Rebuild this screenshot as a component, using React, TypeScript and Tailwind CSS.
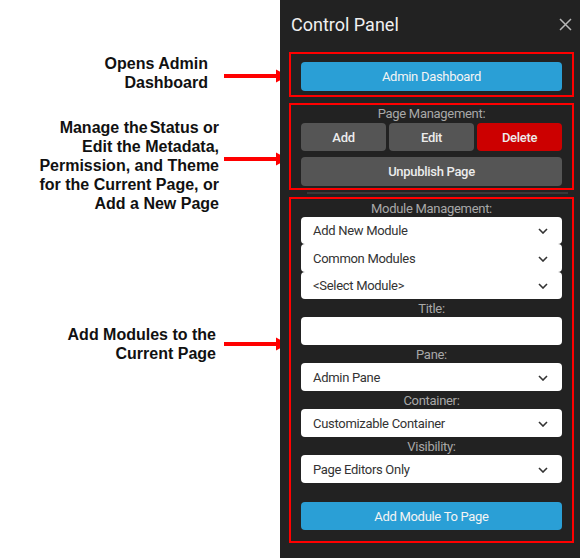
import { ReactNode } from 'react';

const roboto = { fontFamily: 'Roboto, "Noto Sans", sans-serif' };

function Arrow() {
  return (
    <svg width="64" height="14" viewBox="0 0 64 14" className="shrink-0">
      <rect x="0" y="5" width="54" height="4" fill="#ff0000" />
      <polygon points="52,0.5 64,7 52,13.5" fill="#ff0000" />
    </svg>
  );
}

function Note({ children, pr, arrowTop, className }: { children: ReactNode; pr: string; arrowTop: string; className: string }) {
  return (
    <div className={`flex items-start ${className}`}>
      <div className={`w-[224px] shrink-0 text-right ${pr}`}>{children}</div>
      <div className={arrowTop}>
        <Arrow />
      </div>
    </div>
  );
}

function Chevron() {
  return (
    <svg width="10" height="6" viewBox="0 0 10 6" className="shrink-0">
      <path d="M1 1 L5 5 L9 1" fill="none" stroke="#333" strokeWidth="1.6" />
    </svg>
  );
}

function Select({ label, h = 'h-[28px]' }: { label: string; h?: string }) {
  return (
    <div className={`${h} flex items-center justify-between rounded-[4px] bg-white pl-[12px] pr-[14px] pt-[1px] text-[#333]`}>
      <span>{label}</span>
      <Chevron />
    </div>
  );
}

function Label({ children }: { children: ReactNode }) {
  return <div className="h-[18px] text-center leading-[19px] text-[#a8a8a8]">{children}</div>;
}

export default function App() {
  return (
    <div className="flex h-[558px] w-[580px] bg-white">
      <div
        className="w-[280px] pt-[54px] text-[16px] font-bold leading-[19px] text-[#111]"
        style={{ fontFamily: '"Liberation Sans", Arial, sans-serif' }}
      >
        <Note pr="pr-[16px]" arrowTop="mt-[15px]" className="">
          Opens Admin
          <br />
          Dashboard
        </Note>
        <Note pr="pr-[5px]" arrowTop="mt-[34px]" className="mt-[26px]">
          Manage the<span className="ml-[2px]">Status or</span>
          <br />
          Edit the Metadata,
          <br />
          Permission, and Theme
          <br />
          for the Current Page, or
          <br />
          Add a New Page
        </Note>
        <Note pr="pr-[8px]" arrowTop="mt-[12px]" className="mt-[112px]">
          Add Modules to the
          <br />
          Current Page
        </Note>
      </div>

      <div className="w-[300px] bg-[#222222] text-[13px] tracking-[-0.3px]" style={roboto}>
        <div className="flex h-[52px] items-start justify-between pl-[11px] pr-[8px] pt-[13px]">
          <div className="text-[18px] leading-[24px] tracking-normal text-[#f0f0f0]">Control Panel</div>
          <svg width="13" height="13" viewBox="0 0 13 13" className="mt-[5px]">
            <path d="M1 1 L12 12 M12 1 L1 12" stroke="#b8b8b8" strokeWidth="1.5" />
          </svg>
        </div>

        <div className="pl-[9px] pr-[6px]">
          <div className="border-2 border-[#ff0000] px-[10px] pb-[4px] pt-[8px]">
            <button className="flex h-[29px] w-full items-center justify-center rounded-[4px] bg-[#2a9fd6] pt-[1px] text-[#f4f4f4]">
              Admin Dashboard
            </button>
          </div>

          <div className="mt-[6px] border-2 border-[#ff0000] px-[10px] pb-[2px]">
            <div className="h-[18px] text-center leading-[18px] text-[#a8a8a8]">Page Management:</div>
            <div className="grid grid-cols-3 gap-[3px] font-medium text-[#ececec]">
              <button className="h-[28px] rounded-[4px] bg-[#555555] pt-[1px]">Add</button>
              <button className="h-[28px] rounded-[4px] bg-[#555555] pt-[1px]">Edit</button>
              <button className="h-[28px] rounded-[4px] bg-[#cc0000] pt-[1px]">Delete</button>
            </div>
            <button className="mt-[6px] h-[29px] w-full rounded-[4px] bg-[#555555] pt-[1px] font-medium text-[#ececec]">
              Unpublish Page
            </button>
          </div>

          <div className="ml-[18px] mr-[6px] mt-[2px] h-[2px] bg-[#383838]" />

          <div className="mt-[3px] border-2 border-[#ff0000] px-[10px] pb-[11px]">
            <Label>Module Management:</Label>
            <div className="flex flex-col">
              <Select label="Add New Module" h="h-[27px]" />
              <Select label="Common Modules" h="h-[28px]" />
              <Select label="<Select Module>" h="h-[27px]" />
            </div>
            <Label>Title:</Label>
            <div className="h-[28px] rounded-[4px] bg-white" />
            <Label>Pane:</Label>
            <Select label="Admin Pane" />
            <Label>Container:</Label>
            <Select label="Customizable Container" />
            <Label>Visibility:</Label>
            <Select label="Page Editors Only" />
            <button className="mt-[19px] flex h-[28px] w-full items-center justify-center rounded-[4px] bg-[#2a9fd6] pt-[1px] text-[#f4f4f4]">
              Add Module To Page
            </button>
          </div>
        </div>
      </div>
    </div>
  );
}
